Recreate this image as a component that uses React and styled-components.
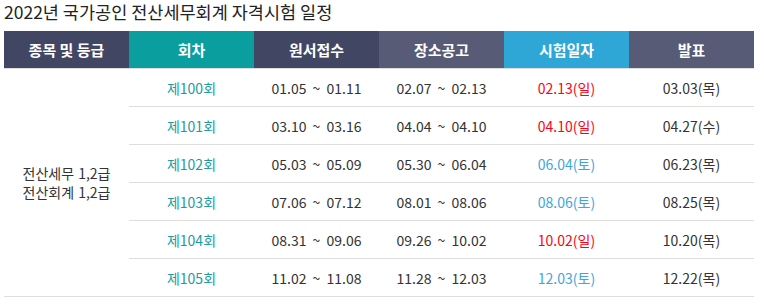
import React from "react";
import styled, { createGlobalStyle } from "styled-components";

const Global = createGlobalStyle`
  html, body { margin: 0; padding: 0; background: #fff; }
  body { font-family: "Noto Sans CJK KR", "Noto Sans", sans-serif; }
`;

const Page = styled.div`
  padding: 0 4px;
`;

const Title = styled.h2`
  margin: 0;
  padding-top: 1px;
  font-size: 17.5px;
  font-weight: 400;
  line-height: 22px;
  color: #222;
  height: 30px;
`;

const Table = styled.table`
  border-collapse: collapse;
  table-layout: fixed;
  width: 750px;
`;

const headBg = {
  dark: "#414762",
  teal: "#0a9e9e",
  slate: "#575b75",
  blue: "#2ea6d6",
};

const Th = styled.th`
  width: 125px;
  height: 37px;
  padding: 0;
  background: ${(p) => headBg[p.$tone]};
  color: #fff;
  font-size: 15px;
  font-weight: 700;
  text-align: center;
  border-bottom: 1px solid #dedede;
`;

const textColor = {
  base: "#333",
  teal: "#1a9da0",
  red: "#ff0016",
  blue: "#3ea6dc",
};

const Td = styled.td`
  height: 37px;
  padding: 0;
  font-size: 14px;
  text-align: center;
  word-spacing: ${(p) => (p.$range ? "3px" : "0")};
  color: ${(p) => textColor[p.$tone || "base"]};
  border-bottom: 1px solid #dedede;
`;

const Grade = styled.td`
  padding: 0;
  font-size: 14px;
  color: #333;
  text-align: center;
  vertical-align: middle;
  border-bottom: 1px solid #dedede;
`;

const GradeLine = styled.div`
  line-height: 19px;
  word-spacing: 1px;
`;

const rows = [
  ["제100회", "01.05 ~ 01.11", "02.07 ~ 02.13", "02.13(일)", "red", "03.03(목)"],
  ["제101회", "03.10 ~ 03.16", "04.04 ~ 04.10", "04.10(일)", "red", "04.27(수)"],
  ["제102회", "05.03 ~ 05.09", "05.30 ~ 06.04", "06.04(토)", "blue", "06.23(목)"],
  ["제103회", "07.06 ~ 07.12", "08.01 ~ 08.06", "08.06(토)", "blue", "08.25(목)"],
  ["제104회", "08.31 ~ 09.06", "09.26 ~ 10.02", "10.02(일)", "red", "10.20(목)"],
  ["제105회", "11.02 ~ 11.08", "11.28 ~ 12.03", "12.03(토)", "blue", "12.22(목)"],
];

export default function App() {
  return (
    <Page>
      <Global />
      <Title>2022년 국가공인 전산세무회계 자격시험 일정</Title>
      <Table>
        <thead>
          <tr>
            <Th $tone="dark">종목 및 등급</Th>
            <Th $tone="teal">회차</Th>
            <Th $tone="dark">원서접수</Th>
            <Th $tone="slate">장소공고</Th>
            <Th $tone="blue">시험일자</Th>
            <Th $tone="slate">발표</Th>
          </tr>
        </thead>
        <tbody>
          {rows.map((r, i) => (
            <tr key={r[0]}>
              {i === 0 && (
                <Grade rowSpan={rows.length}>
                  <GradeLine>전산세무 1,2급</GradeLine>
                  <GradeLine>전산회계 1,2급</GradeLine>
                </Grade>
              )}
              <Td $tone="teal">{r[0]}</Td>
              <Td $range>{r[1]}</Td>
              <Td $range>{r[2]}</Td>
              <Td $tone={r[4]}>{r[3]}</Td>
              <Td>{r[5]}</Td>
            </tr>
          ))}
        </tbody>
      </Table>
    </Page>
  );
}
